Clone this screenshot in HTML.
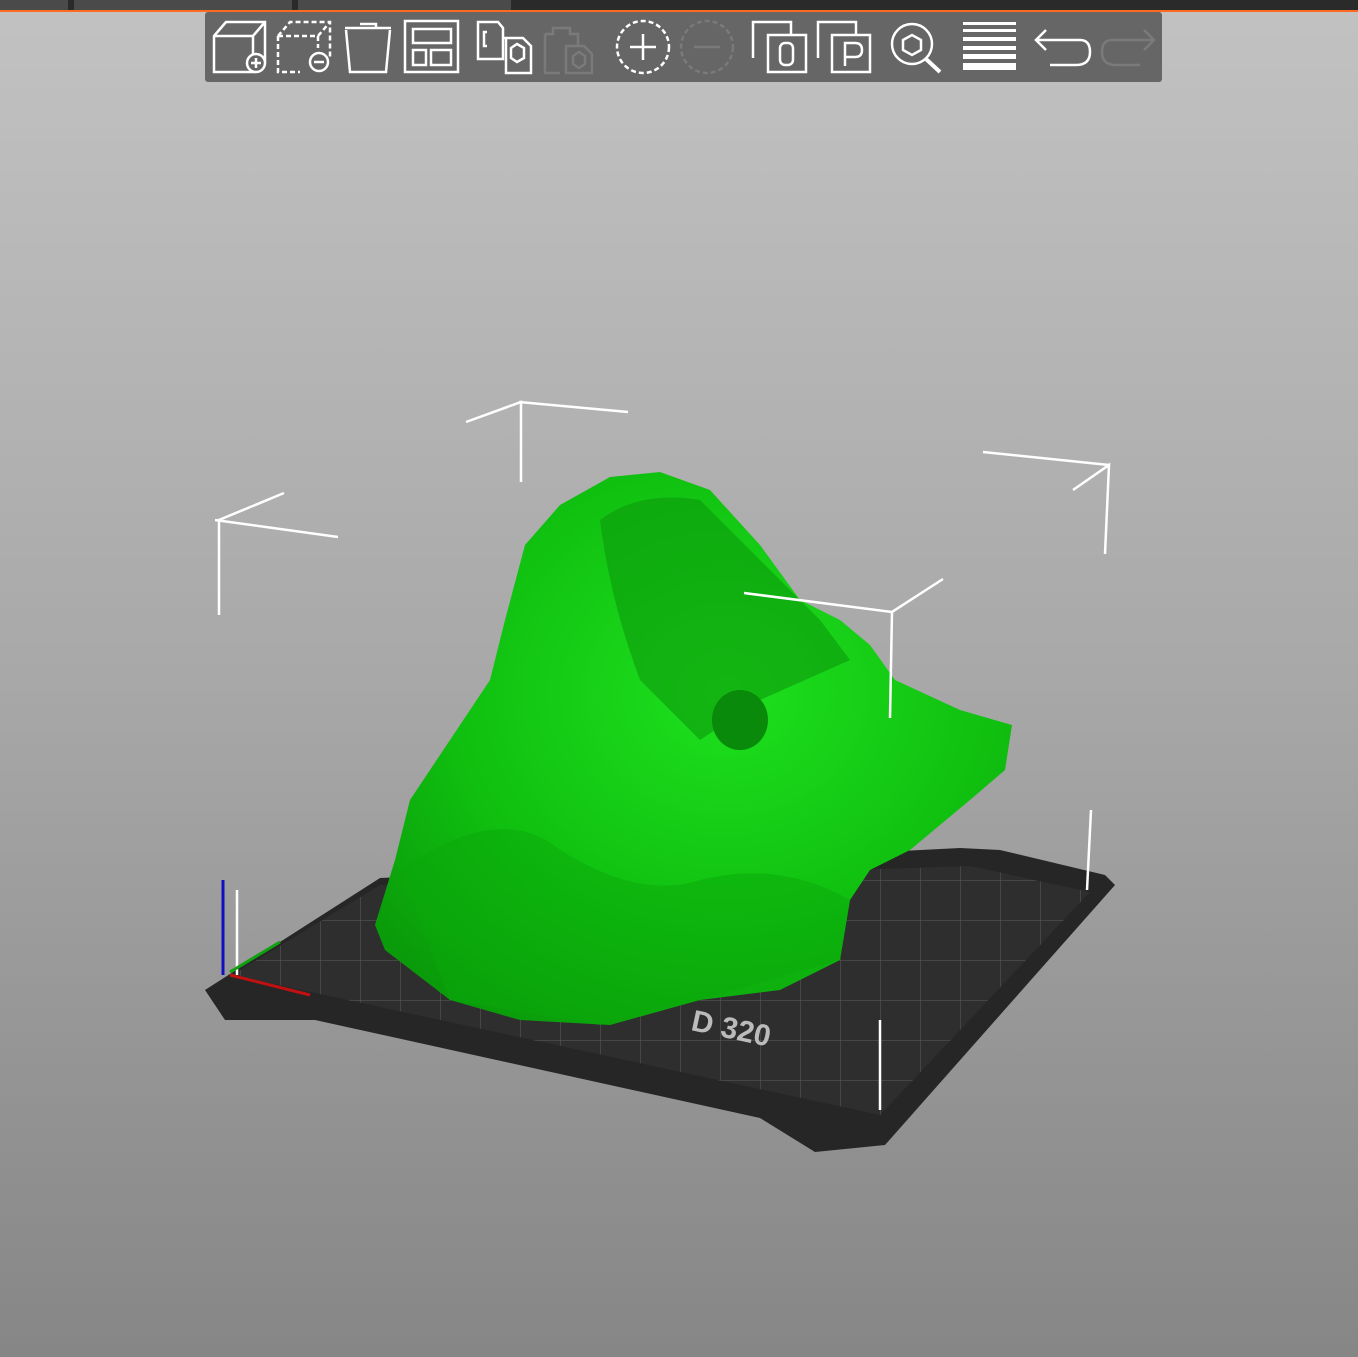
<!DOCTYPE html>
<html><head><style>
body{margin:0;width:1358px;height:1357px;overflow:hidden;background:linear-gradient(#c2c2c2 0%,#a8a8a8 50%,#868686 100%);font-family:"Liberation Sans",sans-serif}
</style></head><body>
<svg width="1358" height="1357" style="position:absolute;left:0;top:0">
<defs>
<radialGradient id="g" cx="0.55" cy="0.4" r="0.7"><stop offset="0" stop-color="#1ee01e"/><stop offset="0.6" stop-color="#10c010"/><stop offset="1" stop-color="#0a9a0a"/></radialGradient>
<pattern id="grid" width="40" height="40" patternUnits="userSpaceOnUse"><path d="M0 0H40M0 0V40" stroke="#6a6a6a" stroke-width="1"/></pattern>
</defs>
<rect x="0" y="0" width="1358" height="10" fill="#2a2a2a"/>
<rect x="0" y="0" width="68" height="10" fill="#4a4a4a"/>
<rect x="74" y="0" width="218" height="10" fill="#4a4a4a"/>
<rect x="298" y="0" width="213" height="10" fill="#4a4a4a"/>
<rect x="0" y="10" width="1358" height="2" fill="#ff6a20"/>
<rect x="205" y="12" width="957" height="70" rx="3" fill="#666"/>
<g fill="none" stroke="#fff" stroke-width="2.5">
<path d="M214 36 L226 22 H265 V62 L255 72 H214 Z M214 36 H253 V60 M253 36 L265 22"/><circle cx="256" cy="63" r="9" fill="#666"/><path d="M251 63H261M256 58V68"/>
<path d="M278 36 L290 22 H330 V58 M278 36V72H300 M278 36H318V48 M318 36L330 22" stroke-dasharray="5 3"/><circle cx="319" cy="62" r="9" fill="#666"/><path d="M314 62H324"/>
<path d="M345 28H391M346 30L350 72H386L390 30M360 24H376V28"/>
<rect x="405" y="21" width="53" height="51"/><rect x="413" y="29" width="38" height="14"/><rect x="413" y="50" width="13" height="15"/><rect x="431" y="50" width="20" height="15"/>
<path d="M478 22H498L503 28V59H478Z"/><path d="M504 38H523L531 46V73H506V38" fill="#666"/><path d="M511 48L517 44L524 48V58L517 62L511 58Z"/><path d="M487 32H484V46H487"/>
<circle cx="643" cy="47" r="26" stroke-dasharray="5 3"/><path d="M630 47H656M643 34V60"/>
<path d="M753 58V22H791V35"/><rect x="768" y="35" width="38" height="37" fill="#666"/><rect x="780" y="43" width="13" height="22" rx="5"/>
<path d="M818 58V22H856V35"/><rect x="832" y="35" width="38" height="37" fill="#666"/><path d="M845 66V43H855Q862 43 862 50Q862 57 855 57H845"/>
<circle cx="912" cy="44" r="20"/><path d="M903 40L912 35L921 40V50L912 55L903 50Z"/><path d="M926 59L940 72" stroke-width="4"/>
<path d="M1036 40H1080Q1090 40 1090 52Q1090 65 1076 65H1050M1046 30L1036 40L1046 50"/>
</g>
<g fill="#fff"><rect x="963" y="22" width="53" height="3"/><rect x="963" y="29" width="53" height="3"/><rect x="963" y="37" width="53" height="4"/><rect x="963" y="46" width="53" height="4"/><rect x="963" y="54" width="53" height="5"/><rect x="963" y="63" width="53" height="7"/></g>
<g fill="none" stroke="#7a7a7a" stroke-width="2.5">
<path d="M545 34H553V28H570V34H578V50M545 34V73H560"/><path d="M566 46H584L592 54V73H566Z" fill="#666"/><path d="M573 56L579 52L585 56V64L579 68L573 64Z"/>
<circle cx="707" cy="47" r="26" stroke-dasharray="5 3"/><path d="M694 47H720"/>
<path d="M1154 40H1112Q1102 40 1102 52Q1102 65 1116 65H1140M1144 30L1154 40L1144 50"/>
</g>
<polygon points="205,990 225,1020 315,1020 760,1118 815,1152 885,1145 1115,885 1105,875 1000,850 960,848 380,878" fill="#262626"/>
<polygon points="232,975 880,1115 1090,892 970,866 380,885" fill="#2e2e2e"/>
<polygon points="232,975 880,1115 1090,892 970,866 380,885" fill="url(#grid)" opacity="0.8"/>
<text x="690" y="1030" fill="#bbb" font-size="30" font-weight="bold" transform="rotate(12 690 1030)">D 320</text>
<g stroke="#fff" stroke-width="2.5" fill="none">
<path d="M219 615V520L284 493M215 520L338 537"/>
<path d="M521 482V402L466 422M519 402L628 412"/>
<path d="M1105 554L1109 465L1073 490M1109 465L983 452"/>
<path d="M237 975V890M880 1110V1020M1087 890L1091 810"/>
</g>
<path d="M223 975V880" stroke="#1010c0" stroke-width="3"/>
<path d="M230 975L310 995" stroke="#c01010" stroke-width="3"/>
<path d="M230 972L280 942" stroke="#10a010" stroke-width="3"/>
<path d="M375 925 L395 860 L410 800 L450 740 L490 680 L505 620 L525 545 L560 505 L610 477 L660 472 L710 490 L760 545 L800 600 L840 620 L870 645 L895 680 L960 710 L1012 725 L1005 770 L970 800 L910 850 L870 870 L850 900 L840 960 L780 990 L700 1000 L610 1025 L520 1020 L450 1000 L385 950 Z" fill="url(#g)"/>
<path d="M600 520 Q640 490 700 500 Q760 560 820 620 L850 660 L760 700 L700 740 L640 680 Q610 600 600 520Z" fill="#0b9a0b" opacity="0.6"/>
<ellipse cx="740" cy="720" rx="28" ry="30" fill="#0a8a0a"/>
<path d="M400 870 Q500 800 560 850 Q640 900 700 880 Q780 860 850 900 L840 960 L700 1000 L600 1025 L450 1000 Z" fill="#0aa80a" opacity="0.5"/>
<path d="M890 718L892 612L943 579M892 612L744 593" stroke="#fff" stroke-width="2.5" fill="none"/>
</svg>
</body></html>
